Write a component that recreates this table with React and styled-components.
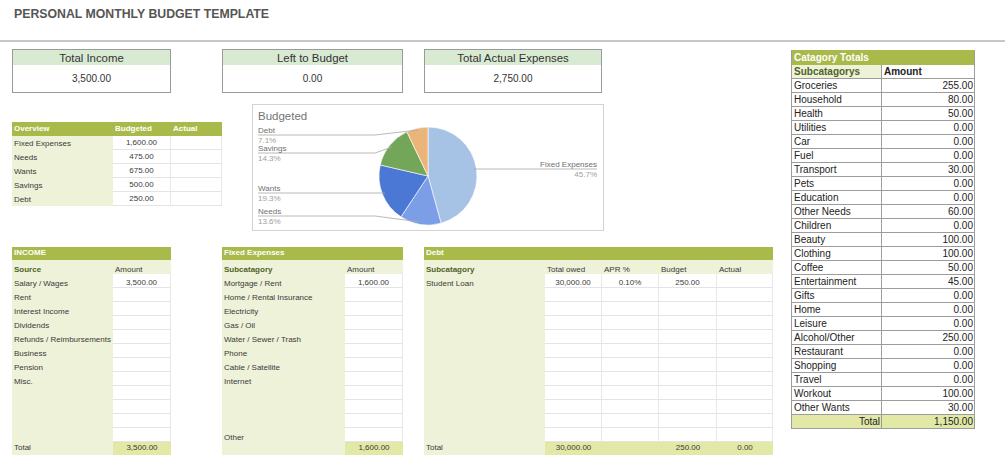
import React from 'react';
import styled, { createGlobalStyle } from 'styled-components';

const OLIVE = '#a9ba4a';
const LIGHT = '#eef2d9';
const TOTAL = '#e2e9a7';
const SUB_TEXT = '#4f6228';

const GlobalStyle = createGlobalStyle`
  body {
    margin: 0;
    background: #fff;
    font-family: "Liberation Sans", Arial, sans-serif;
    color: #333;
  }
`;

const Page = styled.div`
  width: 1005px;
  height: 457px;
  overflow: hidden;
  background: #fff;
`;

const Title = styled.h1`
  margin: 0;
  height: 32px;
  padding: 8px 0 0 14px;
  font-size: 12.3px;
  line-height: 13px;
  font-weight: 700;
  color: #555;
`;

const Rule = styled.div`
  height: 2px;
  background: #c8c8c8;
`;

const Main = styled.div`
  display: flex;
  padding-left: 12px;
`;

const LeftCol = styled.div`
  width: 762px;
  display: flex;
  flex-direction: column;
`;

const RightCol = styled.div`
  margin-left: 17px;
  margin-top: 8px;
`;

const SummaryRow = styled.div`
  display: flex;
  margin-top: 7px;
`;

const SummaryBox = styled.div`
  width: ${p => p.$w}px;
  margin-left: ${p => p.$offset || 0}px;
  height: 44px;
  box-sizing: border-box;
  border: 1px solid #9a9a9a;
  display: flex;
  flex-direction: column;
`;

const SummaryHead = styled.div`
  height: 15px;
  background: #d9ead3;
  display: flex;
  align-items: center;
  justify-content: center;
  font-size: 11.4px;
  color: #333;
`;

const SummaryValue = styled.div`
  flex: 1;
  display: flex;
  align-items: center;
  justify-content: center;
  font-size: 10px;
  color: #333;
`;

const MiddleRow = styled.div`
  display: flex;
  align-items: flex-start;
`;

const BottomRow = styled.div`
  display: flex;
  align-items: flex-start;
  margin-top: 16px;
`;

const Sheet = styled.div`
  display: grid;
  grid-template-columns: ${p => p.$cols.map(c => c + 'px').join(' ')};
  margin-left: ${p => p.$offset || 0}px;
  margin-top: ${p => p.$top || 0}px;
`;

const backgrounds = {
  head: OLIVE,
  label: LIGHT,
  sub: LIGHT,
  input: '#fff',
  total: TOTAL,
};

const Cell = styled.div`
  height: ${p => (p.$h || 14)}px;
  box-sizing: border-box;
  display: flex;
  align-items: ${p => (p.$kind === 'head' || p.$mid ? 'center' : 'flex-end')};
  justify-content: ${p => (p.$align === 'center' ? 'center' : p.$align === 'right' ? 'flex-end' : 'flex-start')};
  padding: 0 2px ${p => (p.$low ? 0 : 1)}px;
  font-size: 8px;
  line-height: ${p => (p.$low ? 9 : 10)}px;
  white-space: nowrap;
  background: ${p => backgrounds[p.$kind]};
  color: ${p => (p.$kind === 'head' ? '#fff' : p.$green ? SUB_TEXT : '#3a3a3a')};
  font-weight: ${p => (p.$kind === 'head' || p.$bold ? 700 : 400)};
  grid-column: ${p => (p.$span ? '1 / -1' : 'auto')};
  ${p => p.$kind === 'input' && 'border-bottom: 1px solid #e4e4e4; border-right: 1px solid #e8e8e8;'}
`;

const ChartBox = styled.div`
  width: 352px;
  height: 127px;
  margin-left: 30px;
  margin-top: 11px;
  box-sizing: border-box;
  border: 1px solid #d3d3d3;
  svg {
    display: block;
  }
  text {
    font-family: "Liberation Sans", Arial, sans-serif;
  }
`;

const CatTable = styled.div`
  width: 183px;
  display: grid;
  grid-template-columns: 90px 93px;
  border-left: 1px solid #9c9c9c;
  box-sizing: border-box;
`;

const CatHead = styled.div`
  grid-column: 1 / -1;
  height: 15px;
  background: ${OLIVE};
  color: #fff;
  font-weight: 700;
  font-size: 10px;
  display: flex;
  align-items: center;
  padding-left: 2px;
  border-right: 1px solid #9c9c9c;
`;

const CatCell = styled.div`
  height: 14px;
  box-sizing: border-box;
  border-right: 1px solid #9c9c9c;
  border-bottom: 1px solid #9c9c9c;
  display: flex;
  align-items: center;
  justify-content: ${p => (p.$right ? 'flex-end' : 'flex-start')};
  padding: 0 1px 0 2px;
  font-size: 10px;
  white-space: nowrap;
  color: ${p => (p.$green ? SUB_TEXT : '#222')};
  font-weight: ${p => (p.$bold ? 700 : 400)};
  background: ${p => (p.$total ? TOTAL : p.$tint ? LIGHT : '#fff')};
`;

const overview = [
  ['Fixed Expenses', '1,600.00', ''],
  ['Needs', '475.00', ''],
  ['Wants', '675.00', ''],
  ['Savings', '500.00', ''],
  ['Debt', '250.00', ''],
];

const pad = (rows, n, width) => {
  const out = rows.slice();
  while (out.length < n) out.push(Array(width).fill(''));
  return out;
};

const income = pad(
  [
    ['Salary / Wages', '3,500.00'],
    ['Rent', ''],
    ['Interest Income', ''],
    ['Dividends', ''],
    ['Refunds / Reimbursements', ''],
    ['Business', ''],
    ['Pension', ''],
    ['Misc.', ''],
  ],
  12,
  2
);

const fixed = [
  ['Mortgage / Rent', '1,600.00'],
  ['Home / Rental Insurance', ''],
  ['Electricity', ''],
  ['Gas / Oil', ''],
  ['Water / Sewer / Trash', ''],
  ['Phone', ''],
  ['Cable / Satellite', ''],
  ['Internet', ''],
  ['', ''],
  ['', ''],
  ['', ''],
  ['Other', ''],
];

const debt = pad([['Student Loan', '30,000.00', '0.10%', '250.00', '']], 12, 5);

const categories = [
  ['Groceries', '255.00'],
  ['Household', '80.00'],
  ['Health', '50.00'],
  ['Utilities', '0.00'],
  ['Car', '0.00'],
  ['Fuel', '0.00'],
  ['Transport', '30.00'],
  ['Pets', '0.00'],
  ['Education', '0.00'],
  ['Other Needs', '60.00'],
  ['Children', '0.00'],
  ['Beauty', '100.00'],
  ['Clothing', '100.00'],
  ['Coffee', '50.00'],
  ['Entertainment', '45.00'],
  ['Gifts', '0.00'],
  ['Home', '0.00'],
  ['Leisure', '0.00'],
  ['Alcohol/Other', '250.00'],
  ['Restaurant', '0.00'],
  ['Shopping', '0.00'],
  ['Travel', '0.00'],
  ['Workout', '100.00'],
  ['Other Wants', '30.00'],
];

const BottomTable = ({ title, cols, sub, rows, total, offset }) => (
  <Sheet $cols={cols} $offset={offset}>
    <Cell $kind="head" $span $h={13}>{title}</Cell>
    {sub.map((s, i) => (
      <Cell key={'s' + i} $kind="sub" $low $bold={i === 0} $green={i === 0}>{s}</Cell>
    ))}
    {rows.map((r, ri) =>
      r.map((v, ci) => (
        <Cell key={ri + '-' + ci} $low $kind={ci === 0 ? 'label' : 'input'} $align={ci === 0 ? 'left' : 'center'}>
          {v}
        </Cell>
      ))
    )}
    {total.map((v, ci) => (
      <Cell key={'t' + ci} $mid $kind={ci === 0 ? 'label' : 'total'} $align={ci === 0 ? 'left' : 'center'} $h={13}>
        {v}
      </Cell>
    ))}
  </Sheet>
);

// pie chart
const CX = 175;
const CY = 71;
const R = 49;
const slices = [
  { v: 45.7, color: '#a6c3e6' },
  { v: 13.6, color: '#7b9ee6' },
  { v: 19.3, color: '#4a78d4' },
  { v: 14.3, color: '#74a65a' },
  { v: 7.1, color: '#ebb57a' },
];

const pt = (frac, r) => {
  const a = frac * 2 * Math.PI;
  return [CX + r * Math.sin(a), CY - r * Math.cos(a)];
};

const PieChart = () => {
  let acc = 0;
  const paths = slices.map((s, i) => {
    const start = acc / 100;
    acc += s.v;
    const end = acc / 100;
    const [x1, y1] = pt(start, R);
    const [x2, y2] = pt(end, R);
    const large = end - start > 0.5 ? 1 : 0;
    return (
      <path
        key={i}
        d={`M${CX} ${CY} L${x1.toFixed(2)} ${y1.toFixed(2)} A${R} ${R} 0 ${large} 1 ${x2.toFixed(2)} ${y2.toFixed(2)} Z`}
        fill={s.color}
        stroke="#fff"
        strokeWidth="0.6"
      />
    );
  });
  const lab = { fontSize: 8, fill: '#6f6f6f' };
  const pct = { fontSize: 8, fill: '#9e9e9e' };
  return (
    <svg width="350" height="125" viewBox="0 0 350 125">
      <text x="5" y="15" fontSize="11.5" fill="#757575">Budgeted</text>
      {paths}
      <g stroke="#a8a8a8" strokeWidth="0.8" fill="none">
        <polyline points="5,30 122,30 165,25" />
        <polyline points="5,48 122,48 139,42" />
        <polyline points="5,88 132,88" />
        <polyline points="5,111 122,111 167,117" />
        <polyline points="221,64 344,64" />
      </g>
      <text x="5" y="28" {...lab}>Debt</text>
      <text x="5" y="38" {...pct}>7.1%</text>
      <text x="5" y="46" {...lab}>Savings</text>
      <text x="5" y="56" {...pct}>14.3%</text>
      <text x="5" y="86" {...lab}>Wants</text>
      <text x="5" y="96" {...pct}>19.3%</text>
      <text x="5" y="109" {...lab}>Needs</text>
      <text x="5" y="119" {...pct}>13.6%</text>
      <text x="344" y="62" textAnchor="end" {...lab}>Fixed Expenses</text>
      <text x="344" y="72" textAnchor="end" {...pct}>45.7%</text>
    </svg>
  );
};

export default function App() {
  return (
    <Page>
      <GlobalStyle />
      <Title>PERSONAL MONTHLY BUDGET TEMPLATE</Title>
      <Rule />
      <Main>
        <LeftCol>
          <SummaryRow>
            <SummaryBox $w={159}>
              <SummaryHead>Total Income</SummaryHead>
              <SummaryValue>3,500.00</SummaryValue>
            </SummaryBox>
            <SummaryBox $w={181} $offset={51}>
              <SummaryHead>Left to Budget</SummaryHead>
              <SummaryValue>0.00</SummaryValue>
            </SummaryBox>
            <SummaryBox $w={178} $offset={21}>
              <SummaryHead>Total Actual Expenses</SummaryHead>
              <SummaryValue>2,750.00</SummaryValue>
            </SummaryBox>
          </SummaryRow>

          <MiddleRow>
            <Sheet $cols={[101, 58, 51]} $top={29}>
              <Cell $kind="head">Overview</Cell>
              <Cell $kind="head">Budgeted</Cell>
              <Cell $kind="head">Actual</Cell>
              {overview.map((r, ri) =>
                r.map((v, ci) => (
                  <Cell key={ri + '-' + ci} $kind={ci === 0 ? 'label' : 'input'} $align={ci === 0 ? 'left' : 'center'}>
                    {v}
                  </Cell>
                ))
              )}
            </Sheet>
            <ChartBox>
              <PieChart />
            </ChartBox>
          </MiddleRow>

          <BottomRow>
            <BottomTable
              title="INCOME"
              cols={[101, 58]}
              sub={['Source', 'Amount']}
              rows={income}
              total={['Total', '3,500.00']}
            />
            <BottomTable
              title="Fixed Expenses"
              cols={[123, 58]}
              sub={['Subcatagory', 'Amount']}
              rows={fixed}
              total={['', '1,600.00']}
              offset={51}
            />
            <BottomTable
              title="Debt"
              cols={[121, 57, 57, 58, 56]}
              sub={['Subcatagory', 'Total owed', 'APR %', 'Budget', 'Actual']}
              rows={debt}
              total={['Total', '30,000.00', '', '250.00', '0.00']}
              offset={21}
            />
          </BottomRow>
        </LeftCol>

        <RightCol>
          <CatTable>
            <CatHead>Catagory Totals</CatHead>
            <CatCell $bold $green $tint>Subcatagorys</CatCell>
            <CatCell $bold>Amount</CatCell>
            {categories.map(([name, amt]) => (
              <React.Fragment key={name}>
                <CatCell>{name}</CatCell>
                <CatCell $right>{amt}</CatCell>
              </React.Fragment>
            ))}
            <CatCell $right $total>Total</CatCell>
            <CatCell $right $total>1,150.00</CatCell>
          </CatTable>
        </RightCol>
      </Main>
    </Page>
  );
}
